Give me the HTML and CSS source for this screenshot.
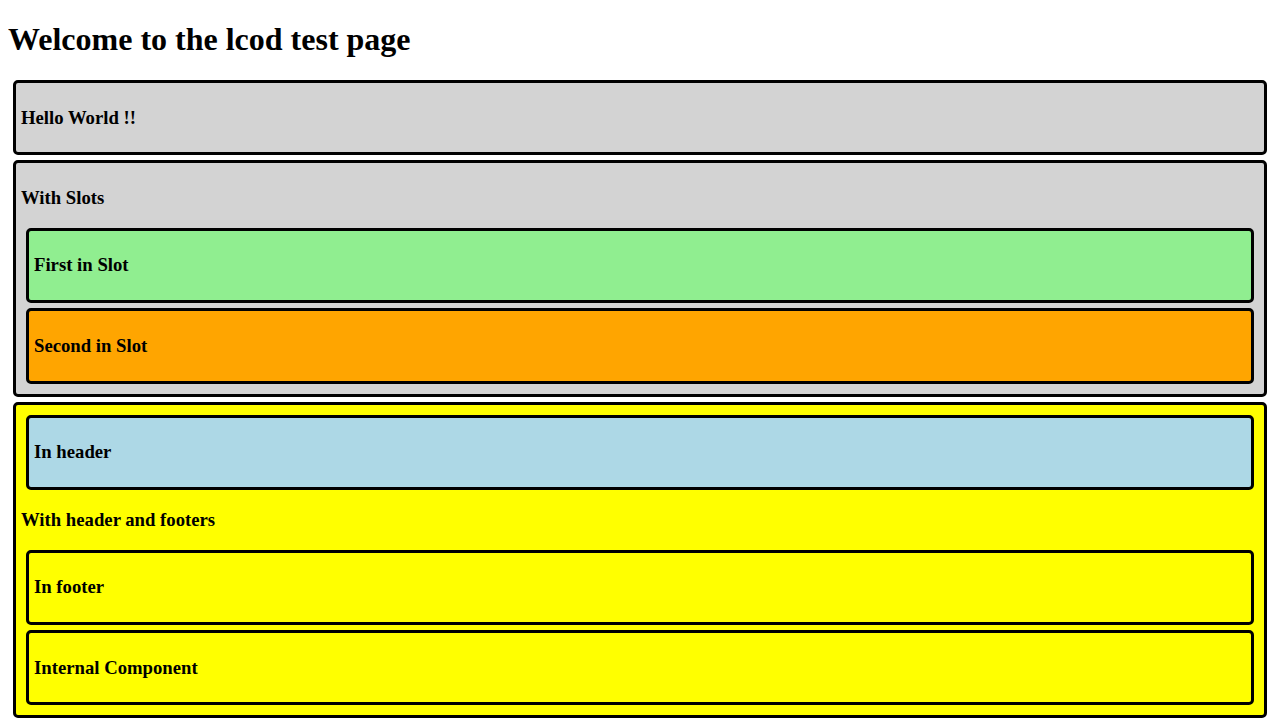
FILE: index.html
```html
<!DOCTYPE html>
<html lang="en">
<head>
    <meta charset="UTF-8">
    <meta name="viewport" content="width=device-width, initial-scale=1.0">
    <title>lcod test page</title>
    <link rel="stylesheet" href="styles.css">
</head>
<body>

<h1>Welcome to the lcod test page</h1>

<!-- === Simple component === -->
<div class="box gray">
    <h3>Hello World !!</h3>
</div>

<!-- === Component with slots === -->
<div class="box gray">
    <h3>With Slots</h3>
    <div class="box green">
        <h3>First in Slot</h3>
    </div>
    <div class="box orange">
        <h3>Second in Slot</h3>
    </div>
</div>

<!-- === Component with header and footers === -->
<div class="box yellow">
    <div class="box blue">
        <h3>In header</h3>
    </div>
    <h3>With header and footers</h3>
    <div class="box yellow">
        <h3>In footer</h3>
    </div>
    <div class="box yellow">
        <h3>Internal Component</h3>
    </div>
</div>

</body>
</html>
```

FILE: styles.css
```css
/* === Page Styling === */
body {
    font-family: "Liberation Serif", "Times New Roman", serif;
    color: #000;
    margin: 0 8px 8px;
}

/* === Component Boxes === */
.box {
    border: 3px solid black;
    border-radius: 5px;
    margin: 5px;
    padding: 5px;
}

.gray {
    background-color: lightgray;
}

.green {
    background-color: lightgreen;
}

.orange {
    background-color: orange;
}

.blue {
    background-color: lightblue;
}

.yellow {
    background-color: yellow;
}
```
